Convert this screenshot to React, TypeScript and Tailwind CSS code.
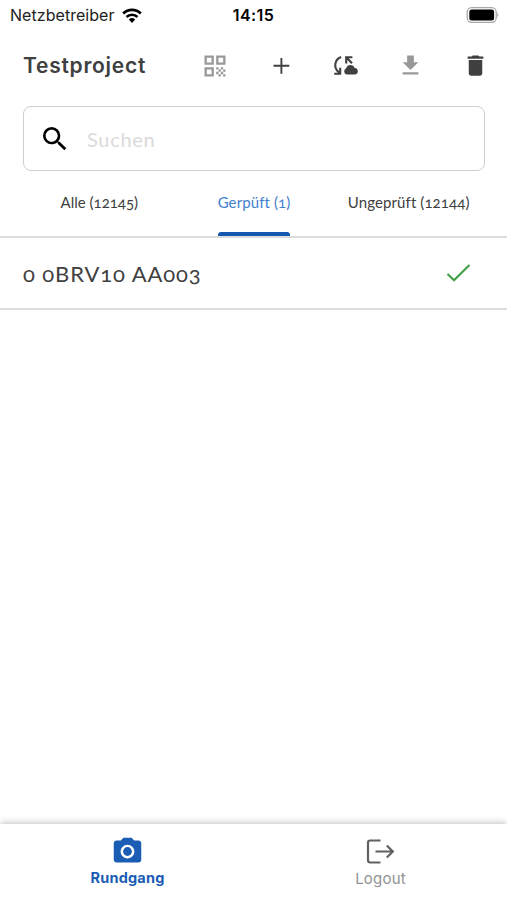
import React from 'react';
import { MdCameraAlt, MdDelete, MdFileDownload, MdQrCode, MdSearch } from 'react-icons/md';

function Wifi() {
  return (
    <svg className="ml-[7px] h-[15px] w-[20px]" viewBox="0 0 20 15">
      <path d="M1.2 5.4a12.6 12.6 0 0 1 17.6 0" fill="none" stroke="#000" strokeWidth="2.8" />
      <path d="M4.5 9a7.9 7.9 0 0 1 11 0" fill="none" stroke="#000" strokeWidth="2.6" />
      <path d="M10 15l-3.2-3.5a4.7 4.7 0 0 1 6.4 0z" />
    </svg>
  );
}

function Battery() {
  return (
    <svg className="h-[16px] w-[33px]" viewBox="0 0 33 16">
      <rect x="1.2" y="0.7" width="29" height="14.6" rx="4.5" fill="none" stroke="#a8a8a8" strokeWidth="1.3" />
      <rect x="3.3" y="2.5" width="24.8" height="11" rx="2.5" />
      <path d="M31.3 5.8c1.4.4 1.4 4 0 4.400z" fill="#a8a8a8" />
    </svg>
  );
}

function Plus() {
  return (
    <svg className="size-[27px]" viewBox="0 0 27 27" fill="none" stroke="#404040" strokeWidth="1.9">
      <path d="M5.500 13.800H21.300M13.400 5.900V21.700" />
    </svg>
  );
}

function CloudSync() {
  return (
    <svg className="h-[21px] w-[25px]" viewBox="335 55.500 25 21" fill="none" stroke="#404040" strokeWidth="2.1">
      <path d="M343.200 57.500C336.200 60 335 69 341.600 73.400" />
      <path d="M342.200 68.200v6h-6" />
      <path d="M348.200 64v-6.300h6.200M348.500 58l5.500 5.800" />
      <path d="M348.500 75a3.300 3.300 0 0 1-.3-6.200c.7-4.300 7.300-4.500 8.500-.2 4.200.2 4.200 6.400-.1 6.400z" fill="#404040" stroke="none" />
    </svg>
  );
}

function Check() {
  return (
    <svg className="h-[20px] w-[25px]" viewBox="0 0 25 20" fill="none" stroke="#43a047" strokeWidth="2.2">
      <path d="M1.500 11L8 17.200L23.500 2" />
    </svg>
  );
}

function Logout() {
  return (
    <svg className="h-[26px] w-[29px]" viewBox="0 0 29 26" fill="none" stroke="#606060" strokeWidth="2.2">
      <path d="M14.500 1.500H4.200Q2 1.500 2 3.700V21.300Q2 23.500 4.200 23.500H14.500M9.500 12.500H26.500M20.800 6.500L26.800 12.500L20.800 18.500" />
    </svg>
  );
}

export default function App() {
  return (
    <div className="flex h-[900px] w-[507px] flex-col overflow-hidden bg-white font-['Lato','Open_Sans',sans-serif] text-[#404040]">
      <div className="grid h-[30px] grid-cols-[1fr_auto_1fr] items-center pl-[10px] pr-[8px] font-['Inter',sans-serif] text-black">
        <div className="flex items-center">
          <span className="text-[16px] tracking-[0.05px] text-[#222]">Netzbetreiber</span>
          <Wifi />
        </div>
        <span className="-ml-[2px] text-[16px] font-semibold tracking-[0.4px]">14:15</span>
        <div className="flex justify-end"><Battery /></div>
      </div>

      <div className="flex h-[76px] items-center pl-[23px] pr-[18px] pb-[5px]">
        <h1 className="w-[178px] font-['Inter',sans-serif] text-[21px] font-semibold tracking-[0.75px]">Testproject</h1>
        <div className="flex flex-1 items-center justify-between">
          <MdQrCode className="size-[28px] text-[#999]" />
          <Plus />
          <CloudSync />
          <MdFileDownload className="size-[27px] text-[#999]" />
          <MdDelete className="size-[27px]" />
        </div>
      </div>

      <div className="ml-[23px] mr-[22px] flex h-[65px] items-center rounded-[8px] border border-[#cfcfcf] pl-[15px]">
        <MdSearch className="size-[32px] text-black" />
        <span className="ml-[16px] text-[20px] tracking-[0.7px] text-[#dadada]">Suchen</span>
      </div>

      <div className="flex h-[67px] border-b-2 border-[#dcdcdc] pl-[22px] pr-[21px] text-[15px] oldstyle-nums">
        <div className="flex flex-1 justify-center pt-[20px]">Alle (12145)</div>
        <div className="flex flex-1 justify-center text-[#4280d0]">
          <div className="flex h-[65px] w-[72px] flex-col items-center justify-between whitespace-nowrap pt-[20px]">
            <span className="tracking-[0.1px]">Gerpüft (1)</span>
            <span className="h-[4px] w-full rounded-t-[3px] bg-[#1458b2]" />
          </div>
        </div>
        <div className="flex flex-1 justify-center pt-[20px] tracking-[0.1px]">Ungeprüft (12144)</div>
      </div>

      <div className="flex h-[72px] items-center justify-between border-b-2 border-[#dcdcdc] pl-[23px] pr-[36px]">
        <span className="text-[22px] tracking-[0.9px] oldstyle-nums">0 0BRV10 AA003</span>
        <Check />
      </div>

      <div className="flex-1" />

      <nav className="flex h-[76px] bg-white pt-[11px] text-[15px] shadow-[0_-1px_7px_rgba(0,0,0,0.25)]">
        <div className="flex flex-1 flex-col items-center pl-[1px] text-[#1b5cb5]">
          <MdCameraAlt className="size-[33px]" />
          <span className="font-['Inter',sans-serif] text-[14.5px] font-bold leading-[20px] tracking-[0.2px]">Rundgang</span>
        </div>
        <div className="flex flex-1 flex-col items-center pt-[4px] font-['Inter',sans-serif] text-[#929292]">
          <Logout />
          <span className="mt-[4px] leading-[20px] tracking-[0.2px]">Logout</span>
        </div>
      </nav>
    </div>
  );
}
